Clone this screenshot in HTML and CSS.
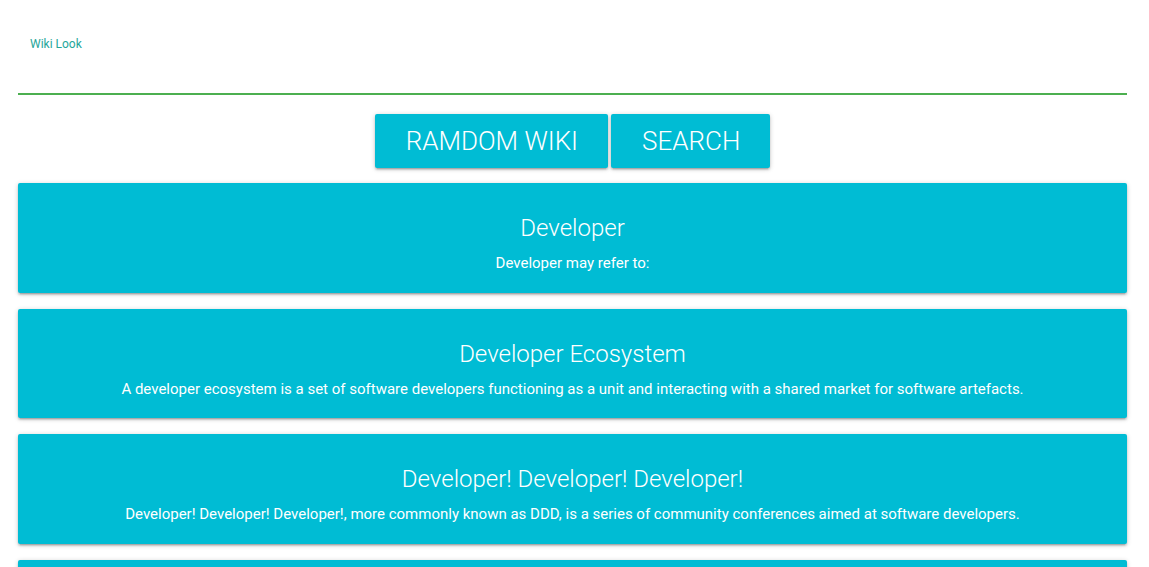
FILE: index.html
```html
<!DOCTYPE html>
<html lang="en">
<head>
<meta charset="utf-8">
<title>Wiki Look</title>
<link rel="stylesheet" href="styles.css">
</head>
<body>
<div class="container">
  <div class="field">
    <label class="field-label" for="q">Wiki Look</label>
    <input class="field-input" id="q" type="text">
  </div>
  <div class="actions">
    <button class="btn">Ramdom Wiki</button>
    <button class="btn">Search</button>
  </div>
  <div class="results">
    <div class="card">
      <h5 class="card-title">Developer</h5>
      <p class="card-text">Developer may refer to:</p>
    </div>
    <div class="card">
      <h5 class="card-title">Developer Ecosystem</h5>
      <p class="card-text">A developer ecosystem is a set of software developers functioning as a unit and interacting with a shared market for software artefacts.</p>
    </div>
    <div class="card">
      <h5 class="card-title">Developer! Developer! Developer!</h5>
      <p class="card-text">Developer! Developer! Developer!, more commonly known as DDD, is a series of community conferences aimed at software developers.</p>
    </div>
    <div class="card">
      <h5 class="card-title">Developer Relations</h5>
      <p class="card-text">Developer relations is a term used for the relationship between a platform and developers.</p>
    </div>
  </div>
</div>
</body>
</html>
```
FILE: styles.css
```css
html, body {
  margin: 0;
  padding: 0;
  background: #fff;
  font-family: Roboto, "Liberation Sans", sans-serif;
  color: rgba(0,0,0,0.87);
}
.container {
  padding: 0 22px 0 18px;
}
.field {
  display: flex;
  flex-direction: column;
  padding-top: 37px;
}
.field-label {
  color: #26a69a;
  font-size: 12px;
  padding-left: 12px;
  line-height: 14px;
}
.field-input {
  border: none;
  border-bottom: 2px solid #4caf50;
  outline: none;
  height: 42px;
  margin-top: 0;
  padding: 0;
  background: transparent;
  font-family: inherit;
  font-size: 16px;
}
.actions {
  display: flex;
  justify-content: center;
  gap: 3px;
  margin-top: 19px;
}
.btn {
  border: none;
  border-radius: 2px;
  background: #00bcd4;
  color: #fff;
  font-family: Roboto, "Liberation Sans", sans-serif;
  font-weight: 300;
  font-size: 26px;
  text-transform: uppercase;
  height: 54px;
  padding: 0 30px 0 31px;
  box-shadow: 0 2px 2px 0 rgba(0,0,0,.14), 0 3px 1px -2px rgba(0,0,0,.12), 0 1px 5px 0 rgba(0,0,0,.2);
}
.results {
  display: flex;
  flex-direction: column;
  gap: 16px;
  margin-top: 15px;
}
.card {
  background: #00bcd4;
  color: #fff;
  border-radius: 2px;
  text-align: center;
  padding: 30px 20px 19.67px;
  box-shadow: 0 2px 2px 0 rgba(0,0,0,.14), 0 3px 1px -2px rgba(0,0,0,.12), 0 1px 5px 0 rgba(0,0,0,.2);
}
.card-title {
  margin: 0;
  font-size: 24px;
  font-weight: 300;
  line-height: 30px;
}
.card-text {
  margin: 10px 0 0;
  font-size: 15px;
  line-height: 20px;
}
```
